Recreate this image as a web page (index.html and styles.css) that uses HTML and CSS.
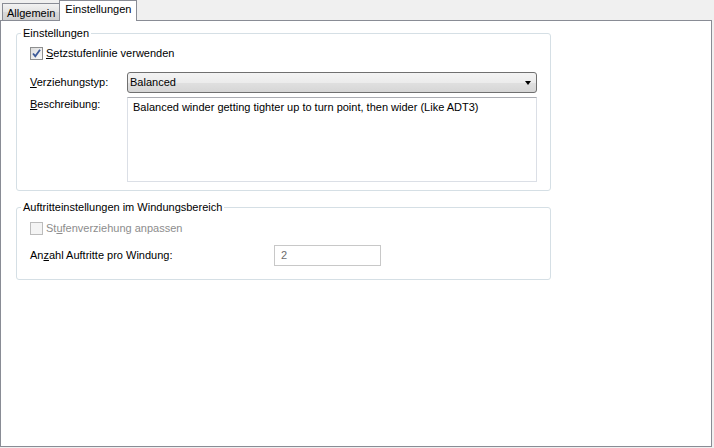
FILE: index.html
```html
<!DOCTYPE html>
<html lang="de">
  <head>
    <meta charset="UTF-8" />
    <title>Einstellungen</title>
    <link rel="stylesheet" href="styles.css">
  </head>
  <body>
    <div class="tabs">
      <div class="tab">Allgemein</div>
      <div class="tab active">Einstellungen</div>
    </div>

    <div class="panel">
      <fieldset class="group">
        <legend>Einstellungen</legend>
        <div class="group-body">
          <div class="check-row">
            <span class="check checked">
              <svg width="11" height="11" viewBox="0 0 11 11">
                <path d="M2 5.5 L4.3 8.2 L9 1.8" fill="none" stroke="#3d5a98" stroke-width="1.8" />
              </svg>
            </span>
            <span><u>S</u>etzstufenlinie verwenden</span>
          </div>

          <div class="field-grid">
            <div class="label combo-label"><u>V</u>erziehungstyp:</div>
            <div class="combo">
              <span>Balanced</span>
              <span class="arrow"></span>
            </div>

            <div class="label desc-label"><u>B</u>eschreibung:</div>
            <div class="textbox">Balanced winder getting tighter up to turn point, then wider (Like ADT3)</div>
          </div>
        </div>
      </fieldset>

      <fieldset class="group group-second">
        <legend>Auftritteinstellungen im Windungsbereich</legend>
        <div class="group-body">
          <div class="check-row disabled">
            <span class="check"></span>
            <span>St<u>u</u>fenverziehung anpassen</span>
          </div>

          <div class="count-row">
            <div class="label count-label">An<u>z</u>ahl Auftritte pro Windung:</div>
            <div class="number-box">2</div>
          </div>
        </div>
      </fieldset>
    </div>
  </body>
</html>
```

FILE: styles.css
```css
body {
  margin: 0;
  padding: 0;
  width: 714px;
  height: 448px;
  overflow: hidden;
  background: #f0f0f0;
  font-family: "Liberation Sans", Arial, sans-serif;
  font-size: 11px;
  line-height: 13px;
  color: #000;
}

/* tab strip */
.tabs {
  display: flex;
  align-items: flex-end;
  height: 20px;
  padding-left: 2px;
}
.tab {
  height: 17px;
  box-sizing: border-box;
  padding: 3px 4px 0 4px;
  border: 1px solid #898c95;
  border-bottom: none;
  background: linear-gradient(#f2f2f2, #e3e3e3 50%, #d9d9d9 51%, #d0d0d0);
}
.tab.active {
  height: 21px;
  margin-bottom: -1px;
  margin-left: -1px;
  padding: 2px 5px 0 5px;
  background: #fff;
  position: relative;
  z-index: 1;
}

.panel {
  width: 712px;
  height: 427px;
  box-sizing: border-box;
  border: 1px solid #898c95;
  background: #fff;
  padding: 6px 0 0 15px;
}

/* group boxes */
.group {
  width: 535px;
  box-sizing: border-box;
  margin: 0;
  padding: 0;
  min-width: 0;
  border: 1px solid #d5dfe5;
  border-radius: 3px;
}
.group legend {
  margin-left: 4px;
  padding: 0 2px;
  line-height: 13px;
}
.group-second {
  margin-top: 10px;
}
.group-body {
  padding: 6px 12px 8px 13px;
}
.group-second .group-body {
  padding-top: 7px;
  padding-bottom: 13px;
}

.check-row {
  display: flex;
  align-items: center;
  gap: 3px;
  height: 14px;
}
.check {
  width: 13px;
  height: 13px;
  box-sizing: border-box;
  border: 1px solid #8e8f8f;
  background: linear-gradient(135deg, #dcdcdc, #fbfbfb);
  display: flex;
  align-items: center;
  justify-content: center;
}
.disabled {
  color: #8d8d8d;
}
.disabled .check {
  border-color: #bcbcbc;
  background: #f4f4f4;
}

.field-grid {
  display: grid;
  grid-template-columns: 97px 410px;
  row-gap: 4px;
  margin-top: 12px;
}
.combo-label {
  align-self: center;
}
.desc-label {
  padding-top: 1px;
}

.combo {
  height: 21px;
  box-sizing: border-box;
  border: 1px solid #707070;
  border-radius: 3px;
  background: linear-gradient(#f3f3f3, #ececec 50%, #e0e0e0 51%, #d6d6d6);
  display: flex;
  align-items: center;
  justify-content: space-between;
  padding: 0 5px 0 2px;
}
.arrow {
  width: 0;
  height: 0;
  border-left: 3.5px solid transparent;
  border-right: 3.5px solid transparent;
  border-top: 4px solid #000;
}

.textbox {
  height: 85px;
  box-sizing: border-box;
  border: 1px solid #dbdfe6;
  border-top-color: #abadb3;
  padding: 3px 5px;
}

.count-row {
  display: flex;
  align-items: center;
  margin-top: 10px;
}
.count-label {
  width: 244px;
}
.number-box {
  width: 107px;
  height: 21px;
  box-sizing: border-box;
  border: 1px solid #c8c8c8;
  padding: 3px 6px;
  color: #6d6d6d;
}
```
